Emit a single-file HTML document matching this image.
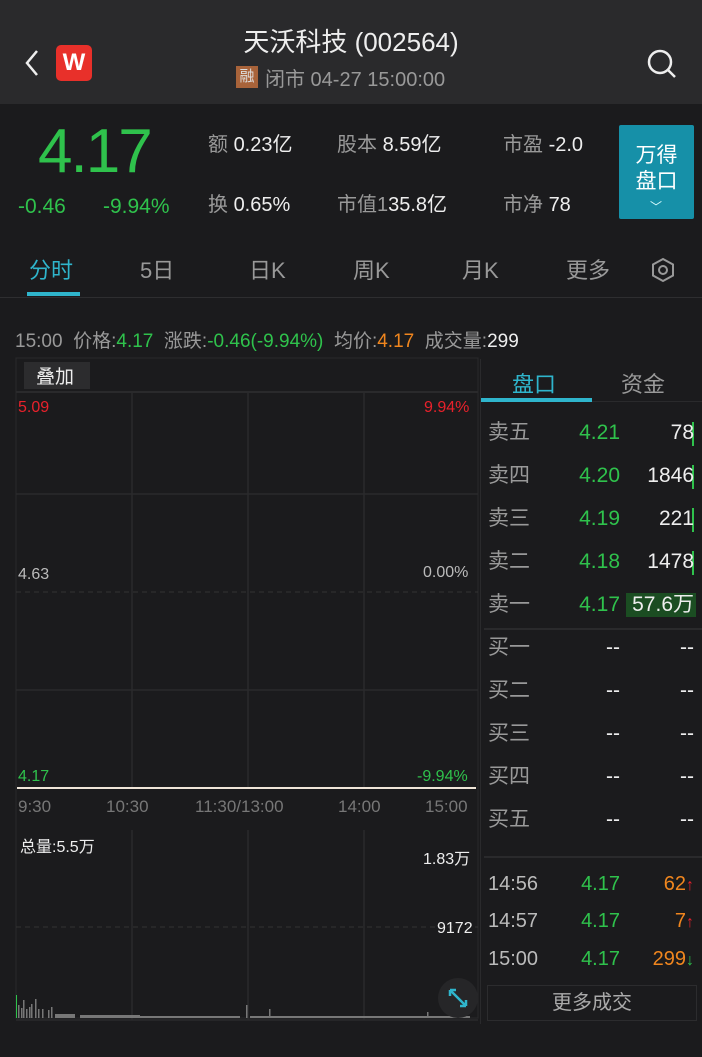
<!DOCTYPE html>
<html><head><meta charset="utf-8"><style>
*{margin:0;padding:0;box-sizing:border-box}
body{width:702px;height:1057px;background:#1b1b1d;font-family:"Liberation Sans","Noto Sans CJK SC",sans-serif;color:#ddd;position:relative;overflow:hidden}
.a{position:absolute;white-space:nowrap}
.g{color:#2fc24c}.r{color:#e8212b}.o{color:#f0861e}.gr{color:#999}.w{color:#eee}
.t{font-size:20px}
</style></head><body>
<div class="a" style="left:0;top:0;width:702px;height:104px;background:#2a2a2c"></div>
<svg class="a" style="left:22px;top:48px" width="20" height="30"><path d="M15 3 L5 15 L15 27" stroke="#eee" stroke-width="2.5" fill="none"/></svg>
<div class="a" style="left:56px;top:45px;width:36px;height:36px;background:#e8302a;border-radius:5px;color:#fff;font-weight:bold;font-size:24px;text-align:center;line-height:36px">W</div>
<div class="a w" style="left:0;width:702px;text-align:center;top:22px;font-size:26px">天沃科技 (002564)</div>
<div class="a" style="left:236px;top:66px;width:22px;height:22px;background:#a8633a;color:#ddd;font-size:15px;text-align:center;line-height:22px">融</div>
<div class="a gr" style="left:265px;top:63px;font-size:20px">闭市 04-27 15:00:00</div>
<svg class="a" style="left:645px;top:47px" width="34" height="34"><circle cx="15" cy="15" r="11" stroke="#eee" stroke-width="2.5" fill="none"/><path d="M23 23 L30 30" stroke="#eee" stroke-width="2.5"/></svg>
<div class="a g" style="left:38px;top:116px;font-size:62px;letter-spacing:-2px">4.17</div>
<div class="a g" style="left:18px;top:195px;font-size:21px">-0.46</div>
<div class="a g" style="left:103px;top:195px;font-size:21px">-9.94%</div>
<div class="a t" style="left:208px;top:128px"><span class="gr">额</span> <span class="w">0.23亿</span></div>
<div class="a t" style="left:337px;top:128px"><span class="gr">股本</span> <span class="w">8.59亿</span></div>
<div class="a t" style="left:503px;top:128px"><span class="gr">市盈</span> <span class="w">-2.0</span></div>
<div class="a t" style="left:208px;top:188px"><span class="gr">换</span> <span class="w">0.65%</span></div>
<div class="a t" style="left:337px;top:188px"><span class="gr">市值1</span><span class="w">35.8亿</span></div>
<div class="a t" style="left:503px;top:188px"><span class="gr">市净</span> <span class="w">78</span></div>
<div class="a" style="left:619px;top:125px;width:75px;height:94px;background:#1690a8;border-radius:2px;color:#fff;font-size:21px;text-align:center;line-height:26px;padding-top:18px">万得<br>盘口</div>
<div class="a" style="left:650px;top:198px;color:#dff;font-size:12px">﹀</div>
<div class="a t" style="left:29px;top:253px;color:#2fb5cc;font-size:22px">分时</div>
<div class="a gr" style="left:140px;top:253px;font-size:22px">5日</div>
<div class="a gr" style="left:249px;top:253px;font-size:22px">日K</div>
<div class="a gr" style="left:353px;top:253px;font-size:22px">周K</div>
<div class="a gr" style="left:462px;top:253px;font-size:22px">月K</div>
<div class="a gr" style="left:566px;top:253px;font-size:22px">更多</div>
<svg class="a" style="left:649px;top:256px" width="28" height="28"><path d="M14 3 L24 8.5 L24 19.5 L14 25 L4 19.5 L4 8.5 Z" stroke="#999" stroke-width="2" fill="none"/><circle cx="14" cy="14" r="4" stroke="#999" stroke-width="2" fill="none"/></svg>
<div class="a" style="left:27px;top:292px;width:53px;height:4px;background:#2fb5cc"></div>
<div class="a" style="left:0;top:297px;width:702px;height:1px;background:#2e2e30"></div>
<div class="a" style="left:15px;top:326px;font-size:19px"><span class="gr">15:00&nbsp; 价格:</span><span class="g">4.17</span><span class="gr">&nbsp; 涨跌:</span><span class="g">-0.46(-9.94%)</span><span class="gr">&nbsp; 均价:</span><span class="o">4.17</span><span class="gr">&nbsp; 成交量:</span><span class="w">299</span></div>
<svg class="a" style="left:0;top:355px" width="480" height="680">
<rect x="16" y="3" width="462" height="660" fill="none" stroke="#2a2a2c"/>
<rect x="24" y="7" width="66" height="27" fill="#2c2c2e"/>
<line x1="16" y1="37" x2="478" y2="37" stroke="#2a2a2c" stroke-width="2"/>
<g stroke="#2a2a2c" stroke-width="1.5">
<line x1="132" y1="37" x2="132" y2="433"/><line x1="248" y1="37" x2="248" y2="433"/><line x1="364" y1="37" x2="364" y2="433"/>
<line x1="132" y1="475" x2="132" y2="665"/><line x1="248" y1="475" x2="248" y2="665"/><line x1="364" y1="475" x2="364" y2="665"/>
<line x1="16" y1="139" x2="478" y2="139"/><line x1="16" y1="335" x2="478" y2="335"/>
<line x1="16" y1="665" x2="478" y2="665"/>
</g>
<line x1="16" y1="237" x2="478" y2="237" stroke="#333" stroke-dasharray="5,4"/>
<line x1="16" y1="572" x2="478" y2="572" stroke="#333" stroke-dasharray="5,4"/>
<line x1="17" y1="433" x2="476" y2="433" stroke="#efe5d8" stroke-width="2"/>
<g fill="#777">
<rect x="16" y="640" width="1" height="23" fill="#2fc24c"/>
<rect x="18" y="650" width="1.5" height="13"/><rect x="21" y="653" width="1.5" height="10"/><rect x="23" y="645" width="1.5" height="18"/><rect x="26" y="654" width="1.5" height="9"/><rect x="29" y="652" width="1.5" height="11"/><rect x="31" y="649" width="1.5" height="14"/><rect x="35" y="644" width="1.5" height="19"/><rect x="38" y="654" width="1.5" height="9"/><rect x="42" y="654" width="1.5" height="9"/><rect x="48" y="655" width="1.5" height="8"/><rect x="51" y="652" width="1.5" height="11"/>
<rect x="55" y="659" width="20" height="4"/><rect x="80" y="660" width="60" height="3"/><rect x="140" y="661" width="100" height="2"/><rect x="246" y="650" width="1.5" height="13"/><rect x="269" y="654" width="1.5" height="9"/><rect x="250" y="661" width="220" height="2"/><rect x="427" y="657" width="1.5" height="6"/>
</g>
<circle cx="458" cy="643" r="20" fill="#262628"/>
<path d="M450 635 L458 643 L466 651 M450 635 L450 641 M450 635 L456 635 M466 651 L466 645 M466 651 L460 651" stroke="#2fb5cc" stroke-width="2.5" fill="none"/>
</svg>
<div class="a w" style="left:36px;top:362px;font-size:19px">叠加</div>
<div class="a r" style="left:18px;top:399px;font-size:16px">5.09</div>
<div class="a r" style="left:424px;top:399px;font-size:16px">9.94%</div>
<div class="a" style="left:18px;top:566px;font-size:16px;color:#bbb">4.63</div>
<div class="a" style="left:423px;top:564px;font-size:16px;color:#bbb">0.00%</div>
<div class="a g" style="left:18px;top:768px;font-size:16px">4.17</div>
<div class="a g" style="left:417px;top:768px;font-size:16px">-9.94%</div>
<div class="a" style="left:18px;top:797px;font-size:17px;color:#777">9:30</div>
<div class="a" style="left:106px;top:797px;font-size:17px;color:#777">10:30</div>
<div class="a" style="left:195px;top:797px;font-size:17px;color:#777">11:30/13:00</div>
<div class="a" style="left:338px;top:797px;font-size:17px;color:#777">14:00</div>
<div class="a" style="left:425px;top:797px;font-size:17px;color:#777">15:00</div>
<div class="a w" style="left:20px;top:833px;font-size:16px">总量:5.5万</div>
<div class="a w" style="left:423px;top:845px;font-size:16px">1.83万</div>
<div class="a w" style="left:437px;top:920px;font-size:16px">9172</div>
<div class="a" style="left:512px;top:367px;font-size:22px;color:#2fb5cc">盘口</div>
<div class="a gr" style="left:621px;top:367px;font-size:22px">资金</div>
<div class="a" style="left:480px;top:398px;width:112px;height:4px;background:#2fb5cc"></div>
<div class="a" style="left:592px;top:401px;width:110px;height:1px;background:#2a2a2c"></div>
<div class="a" style="left:626px;top:593px;width:70px;height:24px;background:#1b4d22"></div>
<div class="a" style="left:692px;top:422px;width:2px;height:24px;background:#2fc24c"></div>
<div class="a" style="left:692px;top:465px;width:2px;height:24px;background:#2fc24c"></div>
<div class="a" style="left:692px;top:508px;width:2px;height:24px;background:#2fc24c"></div>
<div class="a" style="left:692px;top:551px;width:2px;height:24px;background:#2fc24c"></div>
<div id="ob"></div>
<div class="a" style="left:484px;top:628px;width:218px;height:2px;background:#2a2a2c"></div>
<div class="a" style="left:484px;top:856px;width:218px;height:2px;background:#2a2a2c"></div>
<div class="a" style="left:487px;top:985px;width:210px;height:36px;border:1px solid #2c2c2e;text-align:center;line-height:34px;font-size:20px;color:#aaa">更多成交</div>
<div class="a" style="left:480px;top:359px;width:1px;height:665px;background:#2a2a2c"></div>
<script>
var rows=[["卖五","4.21","78",433],["卖四","4.20","1846",476],["卖三","4.19","221",519],["卖二","4.18","1478",562],["卖一","4.17","57.6万",605],
["买一","--","--",648],["买二","--","--",691],["买三","--","--",734],["买四","--","--",777],["买五","--","--",820]];
var h="";
rows.forEach(function(r){var c=r[1]=="--"?"w":"g";
h+='<div class="a gr" style="left:488px;top:'+(r[3]-15)+'px;font-size:21px;line-height:30px">'+r[0]+'</div>';
h+='<div class="a '+c+'" style="right:82px;top:'+(r[3]-15)+'px;font-size:21px;line-height:30px">'+r[1]+'</div>';
h+='<div class="a w" style="right:8px;top:'+(r[3]-15)+'px;font-size:21px;line-height:30px">'+r[2]+'</div>';});
var tr=[["14:56","62","↑","#e8212b",884],["14:57","7","↑","#e8212b",921],["15:00","299","↓","#2fc24c",959]];
tr.forEach(function(r){
h+='<div class="a" style="left:488px;top:'+(r[4]-15)+'px;font-size:20px;line-height:30px;color:#bbb">'+r[0]+'</div>';
h+='<div class="a g" style="right:82px;top:'+(r[4]-15)+'px;font-size:20px;line-height:30px">4.17</div>';
h+='<div class="a o" style="right:8px;top:'+(r[4]-15)+'px;font-size:20px;line-height:30px">'+r[1]+'<span style="color:'+r[3]+';font-size:16px">'+r[2]+'</span></div>';});
document.getElementById("ob").innerHTML=h;
</script>
</body></html>
